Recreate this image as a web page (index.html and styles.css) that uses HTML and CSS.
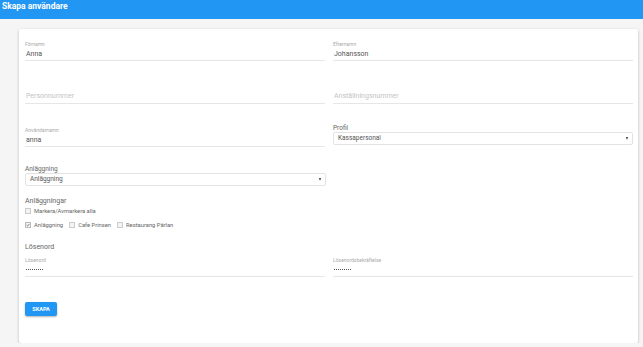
FILE: index.html
```html
<!DOCTYPE html>
<html lang="sv">
<head>
    <meta charset="UTF-8">
    <title>Skapa användare</title>
    <link rel="stylesheet" href="styles.css">
</head>
<body>
    <header class="topbar">Skapa användare</header>

    <div class="card">
        <div class="grid">
            <div class="field">
                <div class="field-label">Förnamn</div>
                <div class="field-value">Anna</div>
            </div>
            <div class="field">
                <div class="field-label">Efternamn</div>
                <div class="field-value">Johansson</div>
            </div>

            <div class="field">
                <div class="field-label"></div>
                <div class="field-value placeholder">Personnummer</div>
            </div>
            <div class="field">
                <div class="field-label"></div>
                <div class="field-value placeholder">Anställningsnummer</div>
            </div>

            <div class="field">
                <div class="field-label">Användarnamn</div>
                <div class="field-value">anna</div>
            </div>
            <div class="select-group">
                <div class="select-label">Profil</div>
                <div class="select">Kassapersonal<span class="caret"></span></div>
            </div>
        </div>

        <div class="select-group single">
            <div class="select-label">Anläggning</div>
            <div class="select">Anläggning<span class="caret"></span></div>
        </div>

        <h3 class="section-title">Anläggningar</h3>
        <div class="check-row">
            <label class="check"><span class="box"></span>Markera/Avmarkera alla</label>
        </div>
        <div class="check-row">
            <label class="check"><span class="box checked"><svg viewBox="0 0 10 10" width="6" height="6"><path d="M1.5 5.2 L4 7.6 L8.6 2.2" fill="none" stroke="#444" stroke-width="1.6"/></svg></span>Anläggning</label>
            <label class="check"><span class="box"></span>Cafe Prinsen</label>
            <label class="check"><span class="box"></span>Restaurang Pärlan</label>
        </div>

        <h3 class="section-title pw-title">Lösenord</h3>
        <div class="grid">
            <div class="field">
                <div class="field-label">Lösenord</div>
                <div class="field-value"><span class="dots"></span></div>
            </div>
            <div class="field">
                <div class="field-label">Lösenordsbekräftelse</div>
                <div class="field-value"><span class="dots"></span></div>
            </div>
        </div>

        <button class="btn">SKAPA</button>
    </div>
</body>
</html>
```

FILE: styles.css
```css
body {
    margin: 0;
    background-color: #f5f5f5;
    font-family: Roboto, "Liberation Sans", Arial, sans-serif;
    color: #333;
}
.topbar {
    background-color: #2196f3;
    color: white;
    height: 19px;
    line-height: 13px;
    padding-left: 2px;
    font-size: 8.5px;
    font-weight: bold;
    box-sizing: border-box;
}
.card {
    background-color: white;
    margin: 10px 5px 0 19px;
    height: 314px;
    box-sizing: border-box;
    padding: 12px 5px 0 6px;
    border-radius: 2px;
    box-shadow: 0 1px 3px rgba(0, 0, 0, 0.25);
}
.grid {
    display: grid;
    grid-template-columns: 300px 300px;
    column-gap: 8px;
    row-gap: 23px;
}
.field {
    height: 19px;
    border-bottom: 1px solid #e6e6e6;
    display: flex;
    flex-direction: column;
}
.field-label {
    font-size: 5px;
    line-height: 6px;
    height: 6px;
    color: #aaa;
}
.field-value {
    font-size: 7px;
    line-height: 14px;
    height: 14px;
    padding-left: 1px;
    color: #555;
    display: flex;
    align-items: center;
}
.field-value.placeholder {
    color: #c4c4c4;
}
.dots {
    display: block;
    width: 17px;
    height: 0;
    border-top: 1px dotted #555;
}
.select-group {
    margin-top: -3px;
}
.select-label {
    font-size: 6.5px;
    line-height: 8px;
    color: #666;
}
.select {
    position: relative;
    height: 13px;
    box-sizing: border-box;
    border: 1px solid #e3e3e3;
    border-radius: 2px;
    font-size: 6.5px;
    line-height: 11px;
    padding-left: 4px;
    color: #555;
}
.caret {
    position: absolute;
    right: 4px;
    top: 4px;
    border-left: 1.5px solid transparent;
    border-right: 1.5px solid transparent;
    border-top: 3px solid #333;
}
.select-group.single {
    width: 301px;
    margin-top: 18px;
}
.section-title {
    margin: 10px 0 0;
    font-size: 7px;
    line-height: 10px;
    font-weight: normal;
    color: #666;
}
.check-row {
    display: flex;
    gap: 6px;
    height: 10px;
    align-items: center;
}
.check-row + .check-row {
    margin-top: 4px;
}
.check {
    display: flex;
    align-items: center;
    font-size: 5.8px;
    color: #666;
}
.box {
    width: 4px;
    height: 4px;
    border: 1px solid #ccc;
    background-color: #f3f3f3;
    margin-right: 3px;
    display: flex;
    align-items: center;
    justify-content: center;
}
.box.checked {
    border-color: #bbb;
}
.pw-title {
    margin-top: 12px;
    margin-bottom: 5px;
}
.btn {
    margin-top: 25px;
    display: block;
    background-color: #2196f3;
    color: white;
    border: none;
    border-radius: 2px;
    width: 32px;
    height: 14px;
    padding: 0;
    font-family: Roboto, "Liberation Sans", Arial, sans-serif;
    font-size: 5.5px;
    font-weight: bold;
    box-shadow: 0 1px 2px rgba(0, 0, 0, 0.3);
}
```
